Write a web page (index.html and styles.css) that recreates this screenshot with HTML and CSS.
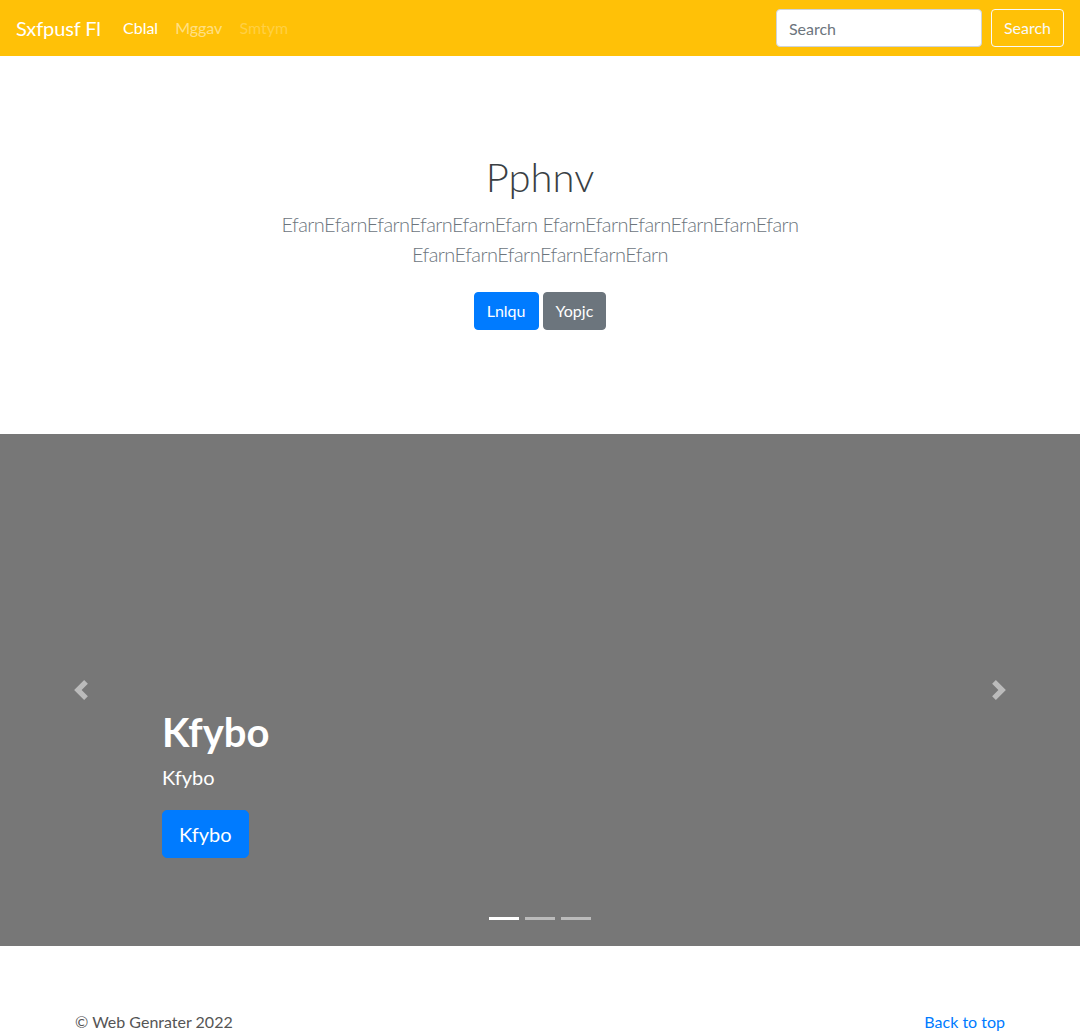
FILE: index.html
```html
<!DOCTYPE html>
<html lang="en">
<head>
<meta charset="utf-8">
<title>Sxfpusf Fl</title>
<link rel="stylesheet" href="styles.css">
</head>
<body>
<header class="navbar">
  <a class="brand" href="#">Sxfpusf Fl</a>
  <nav class="nav">
    <a class="nav-link active" href="#">Cblal</a>
    <a class="nav-link" href="#">Mggav</a>
    <a class="nav-link disabled" href="#">Smtym</a>
  </nav>
  <form class="search">
    <input class="search-input" type="text" placeholder="Search">
    <button class="btn-outline" type="button">Search</button>
  </form>
</header>

<section class="jumbotron">
  <div class="jumbo-inner">
    <h1 class="jumbo-heading">Pphnv</h1>
    <p class="lead">EfarnEfarnEfarnEfarnEfarnEfarn EfarnEfarnEfarnEfarnEfarnEfarn EfarnEfarnEfarnEfarnEfarnEfarn</p>
    <div class="jumbo-actions">
      <a class="btn btn-primary" href="#">Lnlqu</a>
      <a class="btn btn-secondary" href="#">Yopjc</a>
    </div>
  </div>
</section>

<section class="carousel">
  <a class="carousel-control prev" href="#">
    <svg class="control-icon" viewBox="0 0 8 8" width="20" height="20"><path fill="#fff" d="M5.25 0l-4 4 4 4 1.5-1.5L4.25 4l2.5-2.5L5.25 0z"/></svg>
  </a>
  <div class="carousel-caption">
    <h1 class="caption-title">Kfybo</h1>
    <p class="caption-text">Kfybo</p>
    <a class="btn btn-primary btn-lg" href="#">Kfybo</a>
  </div>
  <a class="carousel-control next" href="#">
    <svg class="control-icon" viewBox="0 0 8 8" width="20" height="20"><path fill="#fff" d="M2.75 0l-1.5 1.5L3.75 4l-2.5 2.5L2.75 8l4-4-4-4z"/></svg>
  </a>
  <ol class="indicators">
    <li class="indicator active"></li>
    <li class="indicator"></li>
    <li class="indicator"></li>
  </ol>
</section>

<footer class="footer">
  <p class="copy">© Web Genrater 2022</p>
  <a class="back" href="#">Back to top</a>
</footer>
</body>
</html>
```

FILE: styles.css
```css
* { box-sizing: border-box; }
html, body { margin: 0; padding: 0; }
body {
  font-family: "Lato", "Noto Sans", sans-serif;
  font-size: 16px;
  line-height: 1.5;
  color: #212529;
  background: #fff;
}
a { text-decoration: none; }

.navbar {
  height: 56px;
  background: #ffc107;
  display: flex;
  align-items: center;
  padding: 0 16px;
}
.brand {
  color: #fff;
  font-size: 20px;
  line-height: 30px;
  margin-right: 14px;
  letter-spacing: -0.1px;
}
.nav { display: flex; flex: 1; }
.nav-link {
  color: rgba(255,255,255,.5);
  padding: 8px;
  line-height: 24px;
}
.nav-link.active { color: #fff; margin-right: 1px; }
.nav-link.disabled { color: rgba(255,255,255,.25); margin-left: 1px; }

.search { display: flex; align-items: center; }
.search-input {
  width: 206px;
  height: 38px;
  padding: 6px 12px;
  font: inherit;
  font-size: 16px;
  color: #495057;
  border: 1px solid #ced4da;
  border-radius: 4px;
  margin-right: 9px;
}
.search-input::placeholder { color: #6c757d; }
.btn-outline {
  height: 38px;
  padding: 6px 12px;
  font: inherit;
  font-size: 16px;
  color: #f8f9fa;
  background: transparent;
  border: 1px solid #f8f9fa;
  border-radius: 4px;
}

.jumbotron {
  padding: 97px 32px 95px;
  text-align: center;
}
.jumbo-inner { max-width: 640px; margin: 0 auto; padding: 0 15px; }
.jumbo-heading {
  margin: 0 0 8px;
  font-size: 40px;
  font-weight: 300;
  line-height: 48px;
  color: #3a3f44;
}
.lead {
  margin: 0 0 16px;
  font-size: 20px;
  font-weight: 300;
  line-height: 30px;
  color: #6c757d;
  letter-spacing: -0.55px;
}
.jumbo-actions {
  display: flex;
  justify-content: center;
  gap: 4px;
  padding: 7px 0 9px;
}

.btn {
  display: inline-block;
  padding: 6px 12px;
  font-size: 16px;
  line-height: 24px;
  border-radius: 4px;
  color: #fff;
  border: 1px solid transparent;
}
.btn-primary { background: #007bff; border-color: #007bff; }
.btn-secondary { background: #6c757d; border-color: #6c757d; }
.btn-lg {
  padding: 8px 16px;
  font-size: 20px;
  line-height: 30px;
  border-radius: 5px;
}

.carousel {
  position: relative;
  height: 512px;
  background: #777;
  margin-bottom: 64px;
}
.carousel-control {
  position: absolute;
  top: 0;
  bottom: 0;
  width: 15%;
  display: flex;
  align-items: center;
  justify-content: center;
  opacity: .5;
}
.carousel-control.prev { left: 0; }
.carousel-control.next { right: 0; }
.control-icon { display: block; }

.carousel-caption {
  position: absolute;
  left: 15%;
  right: 15%;
  bottom: 48px;
  padding: 20px 0 40px;
  color: #fff;
}
.caption-title {
  margin: 0 0 6px;
  font-size: 40px;
  font-weight: 700;
  line-height: 48px;
}
.caption-text {
  margin: 0 0 18px;
  font-size: 20px;
  line-height: 30px;
}

.indicators {
  position: absolute;
  left: 0;
  right: 0;
  bottom: 10px;
  margin: 0 0 16px;
  padding: 0;
  list-style: none;
  display: flex;
  justify-content: center;
  gap: 6px;
}
.indicator {
  width: 30px;
  height: 3px;
  background: rgba(255,255,255,.5);
}
.indicator.active { background: #fff; }

.footer {
  max-width: 960px;
  margin: 0 auto;
  padding: 0 15px;
  display: flex;
  justify-content: space-between;
  color: #555;
}
.copy { margin: 0; }
.back { color: #007bff; }
```
